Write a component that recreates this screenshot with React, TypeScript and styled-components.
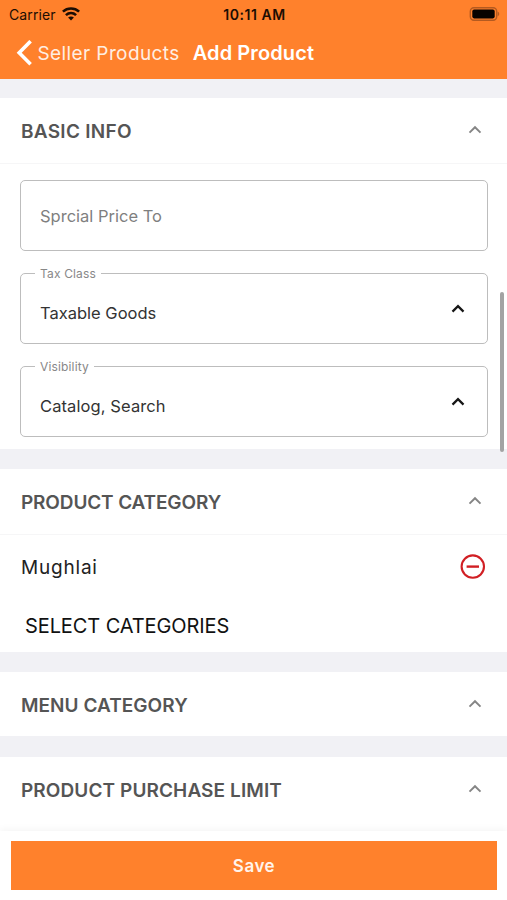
import React from "react";
import styled, { createGlobalStyle } from "styled-components";

const GlobalStyle = createGlobalStyle`
  * { box-sizing: border-box; }
  body { margin: 0; background: #fff; font-family: Inter, "Liberation Sans", sans-serif; }
  button { font: inherit; border: 0; padding: 0; background: none; color: inherit; }
`;

const Screen = styled.div`
  position: relative;
  display: flex;
  flex-direction: column;
  width: 507px;
  height: 900px;
  overflow: hidden;
  background: #f1f1f5;
`;

const TopBar = styled.header`
  flex: none;
  height: 79px;
  background: #ff812c;
`;

const StatusBar = styled.div`
  display: grid;
  grid-template-columns: 1fr auto 1fr;
  align-items: center;
  height: 28px;
  padding: 0 7px 0 9px;
  color: #1c0d03;
  font-size: 14px;
`;

const Carrier = styled.div`
  display: flex;
  align-items: center;
  gap: 6px;
  letter-spacing: 0.1px;
`;

const Clock = styled.div`
  font-weight: 600;
  letter-spacing: 0.55px;
`;

const Battery = styled.svg`
  justify-self: end;
  margin-top: -1px;
`;

const NavBar = styled.nav`
  display: flex;
  align-items: center;
  height: 50px;
  padding-left: 16px;
  color: #fff;
`;

const BackButton = styled.button`
  display: flex;
  align-items: center;
  gap: 4.5px;
  font-size: 19px;
  letter-spacing: 0.4px;
  color: #ffeee2;
`;

const PageTitle = styled.h1`
  margin: 0 0 0 13px;
  font-size: 20px;
  font-weight: 600;
  letter-spacing: 0.1px;
`;

const Content = styled.main`
  display: flex;
  flex: 1;
  flex-direction: column;
  min-height: 0;
  padding-top: 19px;
`;

const Section = styled.section<{ $height: number; $gap?: number }>`
  flex: none;
  height: ${(p) => p.$height}px;
  margin-bottom: ${(p) => p.$gap ?? 20}px;
  background: #fff;
`;

const SectionHeader = styled.div<{ $divider?: boolean }>`
  display: flex;
  align-items: center;
  justify-content: space-between;
  height: 66px;
  padding: 1px 25px 0 21px;
  border-bottom: 1px solid ${(p) => (p.$divider ? "#f6f6f7" : "transparent")};
`;

const SectionTitle = styled.h2<{ $spacing: number }>`
  margin: 0;
  font-size: 19px;
  font-weight: 600;
  letter-spacing: ${(p) => p.$spacing}px;
  color: #555;
`;

const Fields = styled.div`
  display: flex;
  flex-direction: column;
  gap: 22px;
  padding: 16px 19px 0 20px;
`;

const Field = styled.div`
  position: relative;
  display: flex;
  align-items: center;
  justify-content: space-between;
  height: 71px;
  padding: 0 22px 0 19px;
  border: 1.5px solid #bdbdbd;
  border-radius: 5px;
`;

const Placeholder = styled.span`
  font-size: 16.5px;
  color: #7f7f7f;
`;

const Value = styled.span<{ $spacing: number }>`
  padding-top: 9px;
  font-size: 16.5px;
  letter-spacing: ${(p) => p.$spacing}px;
  color: #333;
`;

const FloatingLabel = styled.label`
  position: absolute;
  top: -8px;
  left: 14px;
  padding: 0 5px;
  background: #fff;
  font-size: 12px;
  line-height: 15px;
  letter-spacing: 0.15px;
  color: #888;
`;

const CategoryRow = styled.div`
  display: flex;
  align-items: center;
  justify-content: space-between;
  height: 64px;
  padding: 0 21px;
  font-size: 19px;
  letter-spacing: 0.8px;
  color: #222;
`;

const SelectButton = styled.button`
  display: block;
  margin: 12px 0 0 25px;
  font-size: 20px;
  line-height: 30px;
  letter-spacing: -0.1px;
  color: #111;
`;

const ScrollThumb = styled.div`
  position: absolute;
  top: 292px;
  right: 3px;
  width: 4px;
  height: 160px;
  border-radius: 2px;
  background: #a3a3a3;
`;

const Footer = styled.footer`
  position: relative;
  flex: none;
  height: 69px;
  padding: 10px 10px 10px 11px;
  background: #fff;
  box-shadow: 0 -1px 8px rgba(0, 0, 0, 0.05);
`;

const SaveButton = styled.button`
  width: 100%;
  height: 49px;
  background: #ff812c;
  font-size: 17px;
  font-weight: 600;
  letter-spacing: 0.5px;
  color: #fff4ec;
`;

const HeaderChevron = styled.span`
  display: flex;
  margin-top: -2px;
`;

function Chevron({ dark = false }: { dark?: boolean }) {
  return (
    <svg width="14" height="10" viewBox="0 0 14 10" fill="none">
      <path
        d="M1.5 7.6 7 2.2l5.5 5.4"
        stroke={dark ? "#171717" : "#858585"}
        strokeWidth={dark ? 2.3 : 1.9}
      />
    </svg>
  );
}

function WifiIcon() {
  return (
    <svg width="18" height="14" viewBox="0 0 18 14" fill="none" stroke="#1c0d03" strokeWidth="2.6">
      <path d="M.9 4.6C5.5.4 12.5.4 17.1 4.6" />
      <path d="M3.9 8.1c3-2.7 7.2-2.7 10.2 0" />
      <path d="M9 13.4 6.1 10.5c1.6-1.3 4.2-1.3 5.8 0Z" fill="#1c0d03" stroke="none" />
    </svg>
  );
}

function SelectField({ label, value, spacing = 0 }: { label: string; value: string; spacing?: number }) {
  return (
    <Field>
      <FloatingLabel>{label}</FloatingLabel>
      <Value $spacing={spacing}>{value}</Value>
      <Chevron dark />
    </Field>
  );
}

function Header({ title, divider, spacing }: { title: string; divider?: boolean; spacing: number }) {
  return (
    <SectionHeader $divider={divider}>
      <SectionTitle $spacing={spacing}>{title}</SectionTitle>
      <HeaderChevron>
        <Chevron />
      </HeaderChevron>
    </SectionHeader>
  );
}

export default function App() {
  return (
    <>
      <GlobalStyle />
      <Screen>
        <TopBar>
          <StatusBar>
            <Carrier>
              Carrier
              <WifiIcon />
            </Carrier>
            <Clock>10:11 AM</Clock>
            <Battery width="31" height="14" viewBox="0 0 31 14">
              <rect x="1.3" y=".8" width="26.4" height="12.4" rx="3.6" fill="none" stroke="#b45a20" strokeWidth="1.4" />
              <rect x="3.3" y="2.6" width="22.4" height="8.8" rx="1.8" fill="#080300" />
              <path d="M28.7 4.8c2 .5 2 3.9 0 4.4Z" fill="#b45a20" />
            </Battery>
          </StatusBar>
          <NavBar>
            <BackButton>
              <svg width="17" height="26" viewBox="0 0 17 26" fill="none">
                <path d="M14.6 1.2 3.2 12.7l11.4 11.5" stroke="#fff" strokeWidth="3.6" />
              </svg>
              Seller Products
            </BackButton>
            <PageTitle>Add Product</PageTitle>
          </NavBar>
        </TopBar>

        <Content>
          <Section $height={351}>
            <Header title="BASIC INFO" divider spacing={0.28} />
            <Fields>
              <Field>
                <Placeholder>Sprcial Price To</Placeholder>
              </Field>
              <SelectField label="Tax Class" value="Taxable Goods" />
              <SelectField label="Visibility" value="Catalog, Search" spacing={0.1} />
            </Fields>
          </Section>
          <Section $height={183}>
            <Header title="PRODUCT CATEGORY" divider spacing={-0.14} />
            <CategoryRow>
              Mughlai
              <svg width="26" height="26" viewBox="0 0 26 26" fill="none" stroke="#d11f24" strokeWidth="2.1">
                <circle cx="12.8" cy="12.6" r="11.2" />
                <path d="M6.6 12.6h12.4" strokeWidth="2.4" />
              </svg>
            </CategoryRow>
            <SelectButton>SELECT CATEGORIES</SelectButton>
          </Section>
          <Section $height={64} $gap={21}>
            <Header title="MENU CATEGORY" spacing={0.04} />
          </Section>
          <Section $height={74} $gap={0}>
            <Header title="PRODUCT PURCHASE LIMIT" spacing={0.1} />
          </Section>
        </Content>

        <Footer>
          <SaveButton>Save</SaveButton>
        </Footer>
        <ScrollThumb />
      </Screen>
    </>
  );
}
